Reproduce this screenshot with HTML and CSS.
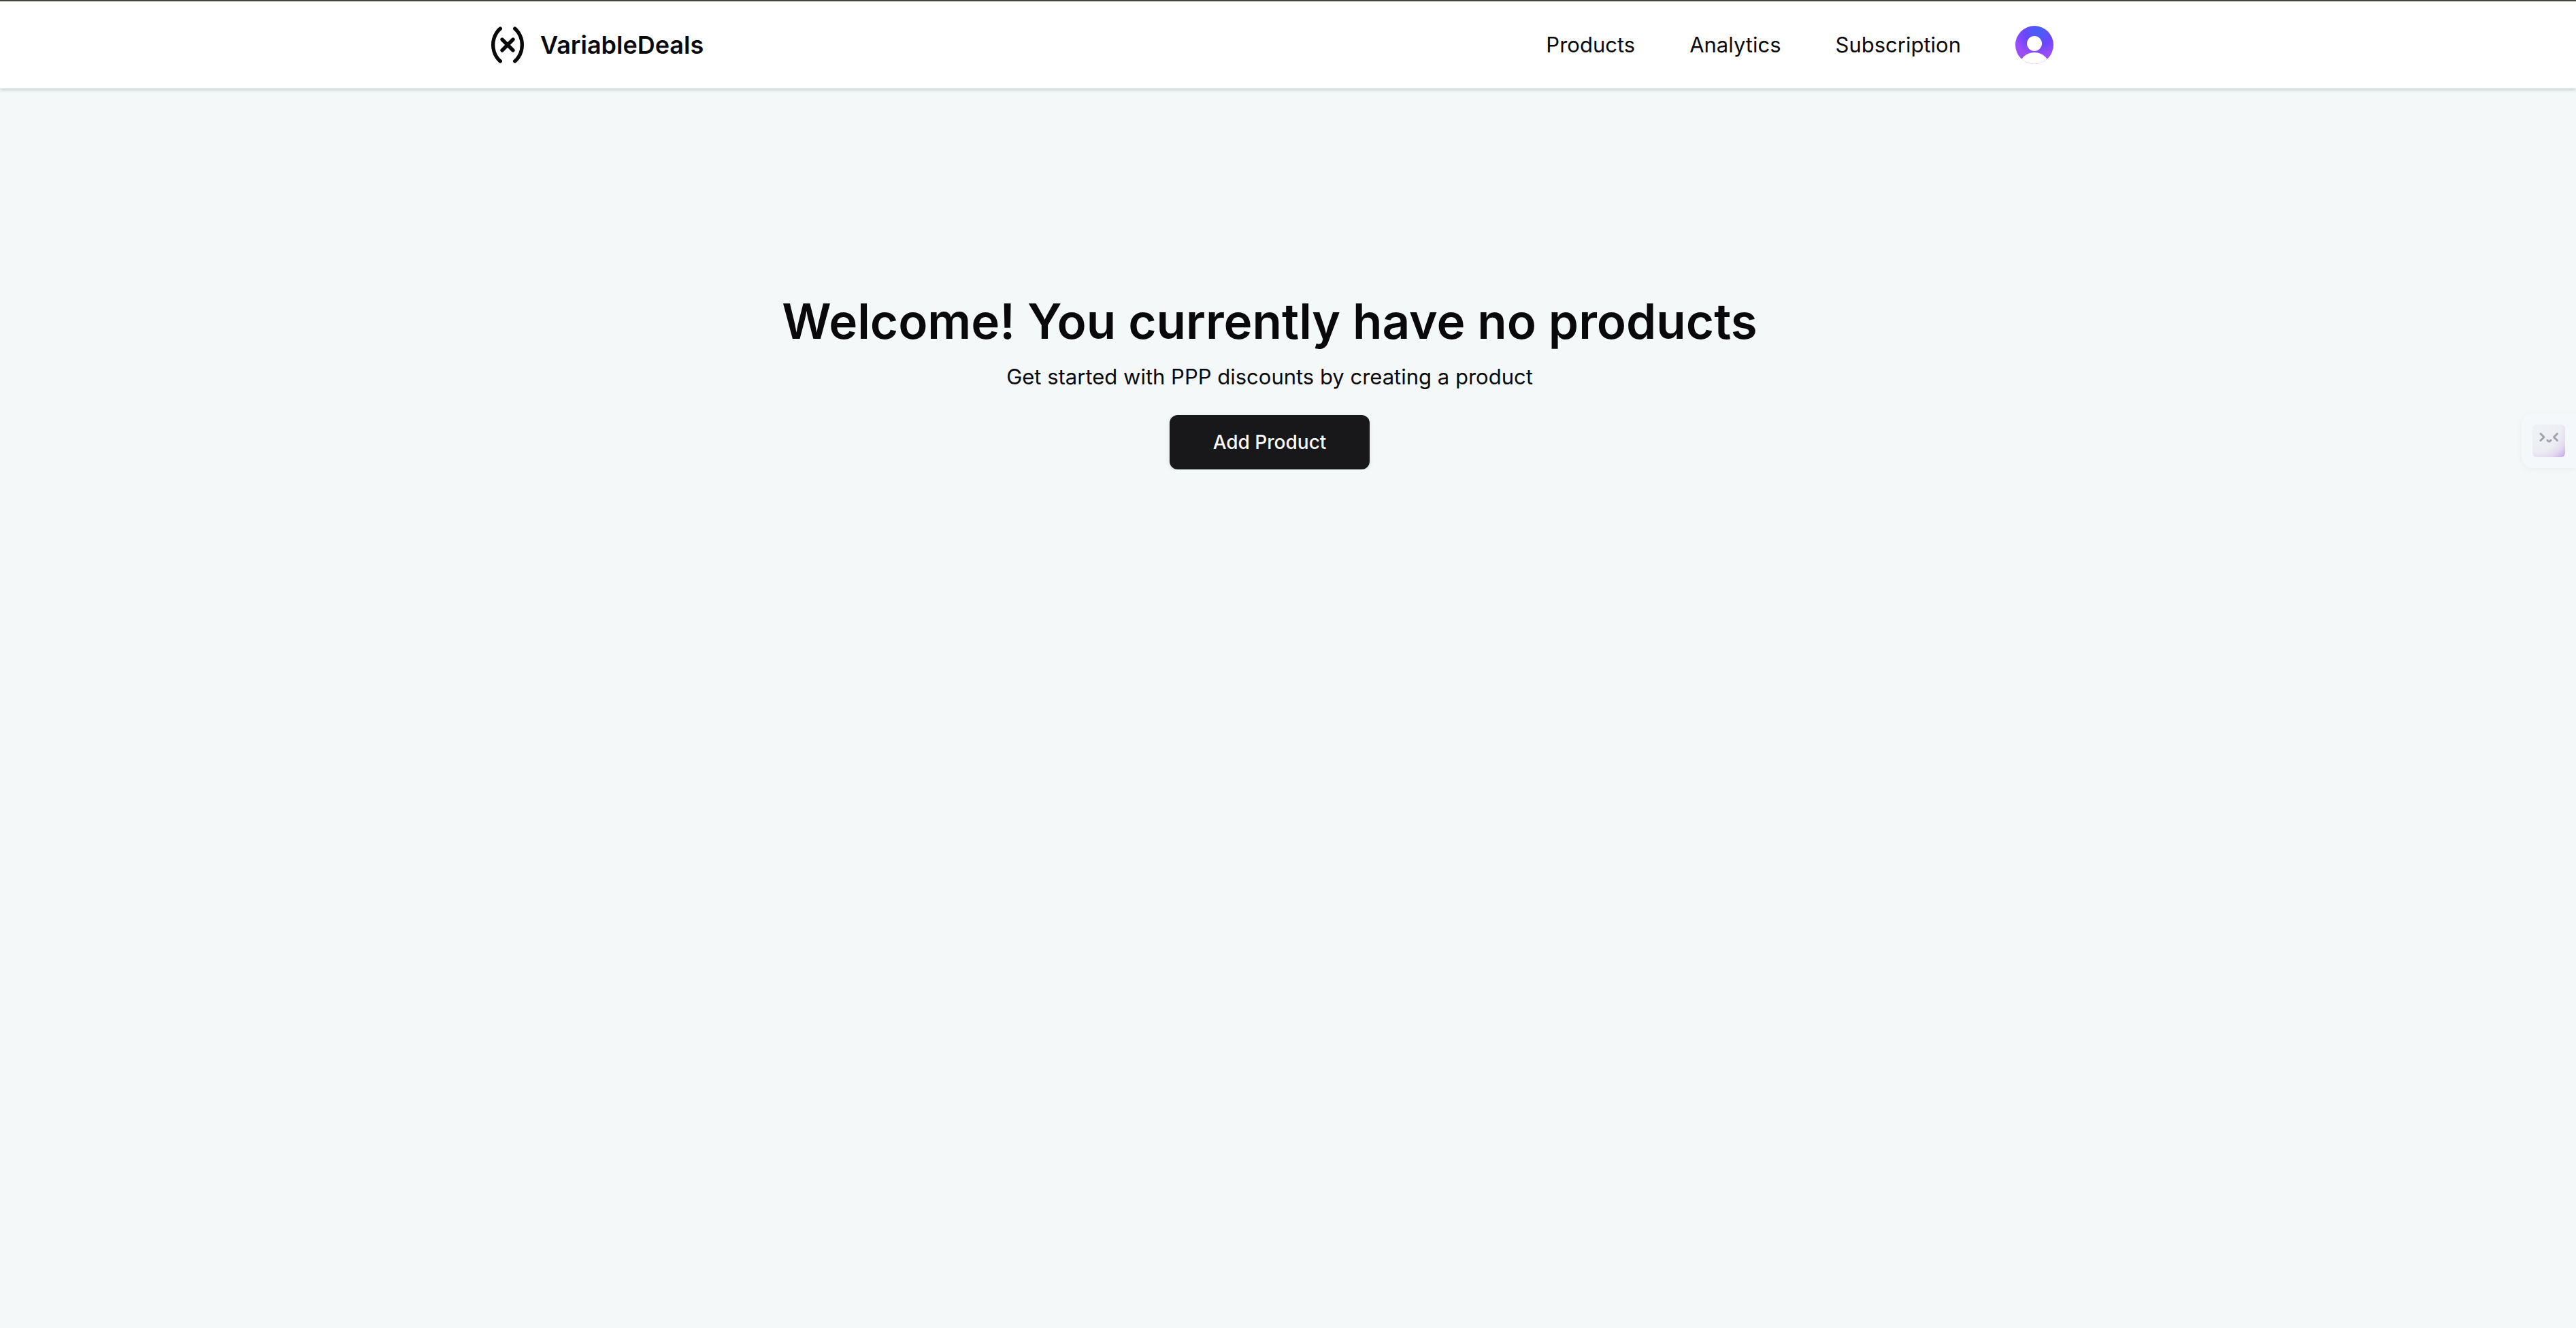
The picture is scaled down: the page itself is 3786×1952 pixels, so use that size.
FILE: index.html
```html
<!DOCTYPE html>
<html lang="en">
<head>
<meta charset="utf-8">
<title>VariableDeals</title>
<link rel="stylesheet" href="styles.css">
</head>
<body>
<header class="site-header">
  <nav class="container nav">
    <a class="brand" href="#">
      <svg class="brand-icon" viewBox="0 0 24 24" fill="none" stroke="currentColor" stroke-width="2" stroke-linecap="round" stroke-linejoin="round" aria-hidden="true">
        <path d="M8 21s-4-3-4-9 4-9 4-9"/>
        <path d="M16 3s4 3 4 9-4 9-4 9"/>
        <path d="M15 9l-6 6M9 9l6 6"/>
      </svg>
      <span class="brand-name">VariableDeals</span>
    </a>
    <a class="nav-link" href="#">Products</a>
    <a class="nav-link" href="#">Analytics</a>
    <a class="nav-link" href="#">Subscription</a>
    <button class="avatar" type="button" aria-label="Open user menu">
      <svg class="avatar-image" viewBox="0 0 56 56" aria-hidden="true">
        <defs>
          <radialGradient id="avatar-fill" cx="0.6" cy="0.15" r="0.9">
            <stop offset="0.1" stop-color="#4b5cf8"/>
            <stop offset="0.42" stop-color="#6c47ff"/>
            <stop offset="0.72" stop-color="#9b4df8"/>
            <stop offset="1" stop-color="#9b4df8"/>
          </radialGradient>
          <clipPath id="avatar-clip"><circle cx="28" cy="28" r="28"/></clipPath>
        </defs>
        <g clip-path="url(#avatar-clip)">
          <rect width="56" height="56" fill="url(#avatar-fill)"/>
          <circle cx="28" cy="26" r="11" fill="#fff"/>
          <circle cx="28" cy="62" r="23" fill="#fff"/>
        </g>
      </svg>
    </button>
  </nav>
</header>
<main class="container welcome">
  <h1 class="title">Welcome! You currently have no products</h1>
  <p class="subtitle">Get started with PPP discounts by creating a product</p>
  <button class="primary-button" type="button">Add Product</button>
</main>
<button class="assistant" type="button" aria-label="Open assistant">
  <svg class="assistant-icon" viewBox="0 0 48 48" aria-hidden="true">
    <defs>
      <radialGradient id="assistant-fill" gradientUnits="userSpaceOnUse" cx="6" cy="4" r="60">
        <stop offset="0" stop-color="#eef2f5"/>
        <stop offset="0.6" stop-color="#ecedf3"/>
        <stop offset="0.8" stop-color="#e2d8ef"/>
        <stop offset="1" stop-color="#c3a6e6"/>
      </radialGradient>
    </defs>
    <rect width="48" height="48" rx="6" fill="url(#assistant-fill)"/>
    <path d="M12 13.500l5 5-5 5M36.500 13.500l-5 5 5 5M22 23q2.500 4 5 0" fill="none" stroke="#a0a3aa" stroke-width="3" stroke-linecap="round" stroke-linejoin="round"/>
  </svg>
</button>
</body>
</html>
```

FILE: styles.css
```css
* {
  box-sizing: border-box;
}

body {
  margin: 0;
  background: #f4f8f9;
  color: #09090b;
  font-family: Inter, "Liberation Sans", sans-serif;
  font-size: 31px;
  line-height: 48px;
}

a {
  color: inherit;
  text-decoration: none;
}

button {
  border: 0;
  padding: 0;
  font: inherit;
  cursor: pointer;
}

.site-header {
  border-top: 2px solid #43463f;
  padding: 32px 54px 32px 0;
  background: #fff;
  box-shadow: 0 2px 6px rgba(0, 0, 0, 0.1), 0 2px 4px rgba(0, 0, 0, 0.1);
}

.container {
  max-width: 2304px;
  margin: 0 auto;
}

.nav {
  display: flex;
  align-items: center;
  gap: 80px;
}

.brand {
  display: flex;
  align-items: center;
  gap: 16px;
  margin-right: auto;
}

.brand-icon {
  width: 64px;
  height: 64px;
}

.brand-name {
  font-size: 36px;
  font-weight: 600;
}

.avatar {
  width: 56px;
  height: 56px;
  border-radius: 50%;
  background: none;
}

.avatar-image {
  display: block;
}

.welcome {
  display: flex;
  flex-direction: column;
  align-items: center;
  box-sizing: content-box;
  padding: 296px 54px 0 0;
  text-align: center;
}

.title {
  margin: 0 0 12px;
  font-size: 71px;
  line-height: 92px;
  font-weight: 600;
}

.subtitle {
  margin: 0 0 32px;
}

.primary-button {
  height: 80px;
  padding: 0 64px;
  border-radius: 12px;
  background: #18181b;
  color: #fafafa;
  font-size: 28px;
  font-weight: 500;
  box-shadow: 0 2px 6px rgba(0, 0, 0, 0.1), 0 2px 4px -2px rgba(0, 0, 0, 0.1);
}

.assistant {
  position: fixed;
  top: 608px;
  right: 0;
  padding: 16px;
  border-radius: 16px 0 0 16px;
  background: #f5f8fa;
  box-shadow: 0 2px 10px rgba(0, 0, 0, 0.05);
}

.assistant-icon {
  display: block;
  width: 48px;
  height: 48px;
}
```
